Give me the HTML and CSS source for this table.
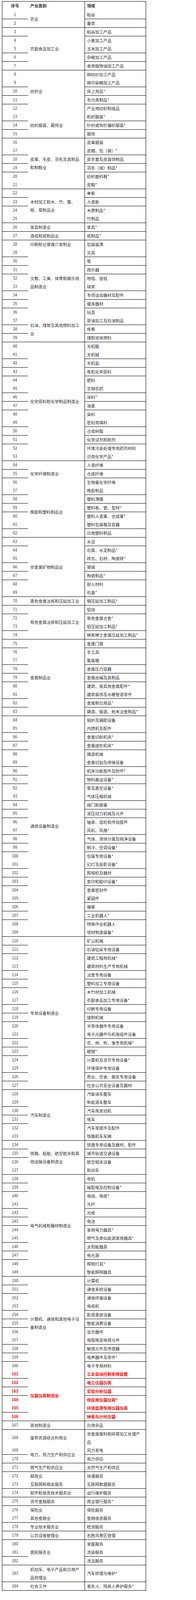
FILE: index.html
```html
<!DOCTYPE html>
<html lang="zh-CN">
<head>
<meta charset="utf-8">
<meta name="viewport" content="width=device-width, initial-scale=1">
<title>产业类别领域表</title>
<link rel="stylesheet" href="styles.css">
</head>
<body>
<div class="tbl" role="table">
<div class="c n h">序号</div><div class="c k h">产业类别</div><div class="c f h">领域</div>
<div class="c n">1</div><div class="c k r2">农业</div><div class="c f">稻谷</div>
<div class="c n">2</div><div class="c f">薯类</div>
<div class="c n">3</div><div class="c k r5">农副食品加工业</div><div class="c f">稻谷加工产品</div>
<div class="c n">4</div><div class="c f">小麦加工产品</div>
<div class="c n">5</div><div class="c f">玉米加工产品</div>
<div class="c n">6</div><div class="c f">杂粮加工产品</div>
<div class="c n">7</div><div class="c f">食用植物油加工产品</div>
<div class="c n">8</div><div class="c k r5">纺织业</div><div class="c f">棉纺纱加工产品</div>
<div class="c n">9</div><div class="c f">棉印染精加工产品</div>
<div class="c n">10</div><div class="c f">床上用品*</div>
<div class="c n">11</div><div class="c f">毛巾类制品*</div>
<div class="c n">12</div><div class="c f">产业用纺织制成品</div>
<div class="c n">13</div><div class="c k r3">纺织服装、服饰业</div><div class="c f">机织服装*</div>
<div class="c n">14</div><div class="c f">针织或钩针编织服装*</div>
<div class="c n">15</div><div class="c f">服饰</div>
<div class="c n">16</div><div class="c k r6">皮革、毛皮、羽毛及其制品和制鞋业</div><div class="c f">皮革服装</div>
<div class="c n">17</div><div class="c f">皮箱、包（袋）*</div>
<div class="c n">18</div><div class="c f">皮手套及皮装饰制品</div>
<div class="c n">19</div><div class="c f">羽毛（绒）制品*</div>
<div class="c n">20</div><div class="c f">纺织面料鞋*</div>
<div class="c n">21</div><div class="c f">皮鞋*</div>
<div class="c n">22</div><div class="c k r4">木材加工和木、竹、藤、棕、草制品业</div><div class="c f">单板</div>
<div class="c n">23</div><div class="c f">人造板</div>
<div class="c n">24</div><div class="c f">木质制品*</div>
<div class="c n">25</div><div class="c f">竹制品</div>
<div class="c n">26</div><div class="c k">家具制造业</div><div class="c f">家具*</div>
<div class="c n">27</div><div class="c k">造纸和纸制品业</div><div class="c f">纸制品*</div>
<div class="c n">28</div><div class="c k">印刷和记录媒介复制业</div><div class="c f">包装装潢</div>
<div class="c n">29</div><div class="c k r8">文教、工美、体育和娱乐用品制造业</div><div class="c f">文具</div>
<div class="c n">30</div><div class="c f">笔</div>
<div class="c n">31</div><div class="c f">西乐器</div>
<div class="c n">32</div><div class="c f">地毯、挂毯</div>
<div class="c n">33</div><div class="c f">球类</div>
<div class="c n">34</div><div class="c f">专项运动器材及配件</div>
<div class="c n">35</div><div class="c f">健身器材</div>
<div class="c n">36</div><div class="c f">玩具</div>
<div class="c n">37</div><div class="c k r3">石油、煤炭及其他燃料加工业</div><div class="c f">原油加工及石油制品</div>
<div class="c n">38</div><div class="c f">炼焦</div>
<div class="c n">39</div><div class="c f">煤制液体燃料</div>
<div class="c n">40</div><div class="c k r14">化学原料和化学制品制造业</div><div class="c f">无机酸</div>
<div class="c n">41</div><div class="c f">无机碱</div>
<div class="c n">42</div><div class="c f">无机盐</div>
<div class="c n">43</div><div class="c f">有机化学原料</div>
<div class="c n">44</div><div class="c f">肥料</div>
<div class="c n">45</div><div class="c f">生物农药</div>
<div class="c n">46</div><div class="c f">涂料*</div>
<div class="c n">47</div><div class="c f">油墨</div>
<div class="c n">48</div><div class="c f">染料</div>
<div class="c n">49</div><div class="c f">密封用填料</div>
<div class="c n">50</div><div class="c f">合成树脂</div>
<div class="c n">51</div><div class="c f">化学试剂和助剂</div>
<div class="c n">52</div><div class="c f">环境污染处理专用药剂材料</div>
<div class="c n">53</div><div class="c f">日用化学产品*</div>
<div class="c n">54</div><div class="c k r3">化学纤维制造业</div><div class="c f">人造纤维</div>
<div class="c n">55</div><div class="c f">合成纤维</div>
<div class="c n">56</div><div class="c f">生物基化学纤维</div>
<div class="c n">57</div><div class="c k r6">橡胶和塑料制品业</div><div class="c f">橡胶制品</div>
<div class="c n">58</div><div class="c f">塑料薄膜</div>
<div class="c n">59</div><div class="c f">塑料板、管、型材*</div>
<div class="c n">60</div><div class="c f">塑料人造革、合成革*</div>
<div class="c n">61</div><div class="c f">塑料包装箱及容器</div>
<div class="c n">62</div><div class="c f">日用塑料制品</div>
<div class="c n">63</div><div class="c k r7">非金属矿物制品业</div><div class="c f">水泥</div>
<div class="c n">64</div><div class="c f">石膏、水泥制品*</div>
<div class="c n">65</div><div class="c f">砖瓦、石材、陶瓷砖*</div>
<div class="c n">66</div><div class="c f">玻璃</div>
<div class="c n">67</div><div class="c f">陶瓷制品*</div>
<div class="c n">68</div><div class="c f">耐火材料</div>
<div class="c n">69</div><div class="c f">石墨*</div>
<div class="c n">70</div><div class="c k">黑色金属冶炼和压延加工业</div><div class="c f">钢压延加工制品*</div>
<div class="c n">71</div><div class="c k r4">有色金属冶炼和压延加工业</div><div class="c f">铅锌</div>
<div class="c n">72</div><div class="c f">有色金属合金*</div>
<div class="c n">73</div><div class="c f">铝压延加工制品*</div>
<div class="c n">74</div><div class="c f">稀有稀土金属压延加工制品*</div>
<div class="c n">75</div><div class="c k r9">金属制品业</div><div class="c f">金属门窗</div>
<div class="c n">76</div><div class="c f">手工具</div>
<div class="c n">77</div><div class="c f">集装箱</div>
<div class="c n">78</div><div class="c f">金属压力容器</div>
<div class="c n">79</div><div class="c f">金属丝绳及其制品</div>
<div class="c n">80</div><div class="c f">建筑、家具用金属配件*</div>
<div class="c n">81</div><div class="c f">建筑装饰及水暖管道零件</div>
<div class="c n">82</div><div class="c f">金属制日用品*</div>
<div class="c n">83</div><div class="c f">铸造、锻造、粉末冶金制品*</div>
<div class="c n">84</div><div class="c k r26">通用设备制造业</div><div class="c f">锅炉及辅助设备</div>
<div class="c n">85</div><div class="c f">内燃机及配件</div>
<div class="c n">86</div><div class="c f">金属切削机床*</div>
<div class="c n">87</div><div class="c f">金属成形机床*</div>
<div class="c n">88</div><div class="c f">铸造机械</div>
<div class="c n">89</div><div class="c f">金属切割及焊接设备</div>
<div class="c n">90</div><div class="c f">机床功能部件及附件*</div>
<div class="c n">91</div><div class="c f">物料搬运设备*</div>
<div class="c n">92</div><div class="c f">泵及真空设备*</div>
<div class="c n">93</div><div class="c f">气体压缩机械</div>
<div class="c n">94</div><div class="c f">阀门和旋塞</div>
<div class="c n">95</div><div class="c f">液压动力机械及元件</div>
<div class="c n">96</div><div class="c f">轴承、齿轮和传动部件</div>
<div class="c n">97</div><div class="c f">风机、风扇*</div>
<div class="c n">98</div><div class="c f">气体、液体分离及纯净设备</div>
<div class="c n">99</div><div class="c f">制冷、空调设备*</div>
<div class="c n">100</div><div class="c f">包装专用设备*</div>
<div class="c n">101</div><div class="c f">幻灯及投影设备*</div>
<div class="c n">102</div><div class="c f">照相机及器材</div>
<div class="c n">103</div><div class="c f">复印和胶印设备*</div>
<div class="c n">104</div><div class="c f">金属密封件</div>
<div class="c n">105</div><div class="c f">紧固件</div>
<div class="c n">106</div><div class="c f">弹簧</div>
<div class="c n">107</div><div class="c f">工业机器人*</div>
<div class="c n">108</div><div class="c f">特殊作业机器人</div>
<div class="c n">109</div><div class="c f">增材制造装备*</div>
<div class="c n">110</div><div class="c k r18">专用设备制造业</div><div class="c f">矿山机械</div>
<div class="c n">111</div><div class="c f">石油钻采专用设备</div>
<div class="c n">112</div><div class="c f">建筑工程用机械*</div>
<div class="c n">113</div><div class="c f">建筑材料生产专用机械</div>
<div class="c n">114</div><div class="c f">冶金专用设备</div>
<div class="c n">115</div><div class="c f">塑料加工专用设备</div>
<div class="c n">116</div><div class="c f">木竹材加工机械</div>
<div class="c n">117</div><div class="c f">农副食品加工专用设备*</div>
<div class="c n">118</div><div class="c f">印刷专用设备</div>
<div class="c n">119</div><div class="c f">缝制机械</div>
<div class="c n">120</div><div class="c f">半导体器件专用设备</div>
<div class="c n">121</div><div class="c f">电子元器件与机电组件设备</div>
<div class="c n">122</div><div class="c f">农、林、牧、渔专用机械*</div>
<div class="c n">123</div><div class="c f">眼镜*</div>
<div class="c n">124</div><div class="c f">计算机及货币专用设备*</div>
<div class="c n">125</div><div class="c f">环境保护专用设备</div>
<div class="c n">126</div><div class="c f">商业、饮食、服务专用设备</div>
<div class="c n">127</div><div class="c f">社会公共安全设备及器材</div>
<div class="c n">128</div><div class="c k r6">汽车制造业</div><div class="c f">汽柴油车整车</div>
<div class="c n">129</div><div class="c f">新能源车整车</div>
<div class="c n">130</div><div class="c f">汽车用发动机</div>
<div class="c n">131</div><div class="c f">电车</div>
<div class="c n">132</div><div class="c f">汽车零部件及配件</div>
<div class="c n">133</div><div class="c f">铁路机车车辆</div>
<div class="c n">134</div><div class="c k r4">铁路、船舶、航空航天和其他运输设备制造业</div><div class="c f">铁路专用设备及器材、配件</div>
<div class="c n">135</div><div class="c f">城市轨道交通设备</div>
<div class="c n">136</div><div class="c f">航空相关设备</div>
<div class="c n">137</div><div class="c f">助动车</div>
<div class="c n">138</div><div class="c k r12">电气机械和器材制造业</div><div class="c f">电机</div>
<div class="c n">139</div><div class="c f">输配电及控制设备*</div>
<div class="c n">140</div><div class="c f">电线、电缆*</div>
<div class="c n">141</div><div class="c f">光纤</div>
<div class="c n">142</div><div class="c f">光缆</div>
<div class="c n">143</div><div class="c f">电池</div>
<div class="c n">144</div><div class="c f">家用电力器具*</div>
<div class="c n">145</div><div class="c f">燃气及类似能源家用器具*</div>
<div class="c n">146</div><div class="c f">太阳能器具</div>
<div class="c n">147</div><div class="c f">电光源</div>
<div class="c n">148</div><div class="c f">照明灯具*</div>
<div class="c n">149</div><div class="c f">智能照明器具</div>
<div class="c n">150</div><div class="c k r11">计算机、通信和其他电子设备制造业</div><div class="c f">计算机</div>
<div class="c n">151</div><div class="c f">通信系统设备</div>
<div class="c n">152</div><div class="c f">通信终端设备</div>
<div class="c n">153</div><div class="c f">电视机</div>
<div class="c n">154</div><div class="c f">影视录放设备</div>
<div class="c n">155</div><div class="c f">智能消费设备</div>
<div class="c n">156</div><div class="c f">显示器件</div>
<div class="c n">157</div><div class="c f">电阻电容电感元件</div>
<div class="c n">158</div><div class="c f">敏感元件及传感器</div>
<div class="c n">159</div><div class="c f">电声器件及零件*</div>
<div class="c n">160</div><div class="c f">电子专用材料</div>
<div class="c n hl">161</div><div class="c k r6 hl">仪器仪表制造业</div><div class="c f hl">工业自动控制系统装置</div>
<div class="c n hl">162</div><div class="c f hl">电工仪器仪表</div>
<div class="c n hl">163</div><div class="c f hl">实验分析仪器</div>
<div class="c n hl">164</div><div class="c f hl">供应用仪器仪表*</div>
<div class="c n hl">165</div><div class="c f hl">环境监测专用仪器仪表</div>
<div class="c n hl">166</div><div class="c f hl">钟表与计时仪器</div>
<div class="c n">167</div><div class="c k">其他制造业</div><div class="c f">日用杂品</div>
<div class="c n">168</div><div class="c k">废弃资源综合利用业</div><div class="c f">非金属废料和碎屑加工处理产品</div>
<div class="c n">169</div><div class="c k r2">电力、热力生产和供应业</div><div class="c f">风力发电</div>
<div class="c n">170</div><div class="c f">电力供应</div>
<div class="c n">171</div><div class="c k">燃气生产和供应业</div><div class="c f">天然气生产和供应</div>
<div class="c n">172</div><div class="c k">邮政业</div><div class="c f">快递服务</div>
<div class="c n">173</div><div class="c k">互联网和相关服务</div><div class="c f">互联网数据服务</div>
<div class="c n">174</div><div class="c k">软件和信息技术服务业</div><div class="c f">运行维护服务</div>
<div class="c n">175</div><div class="c k">货币金融服务</div><div class="c f">商业银行服务*</div>
<div class="c n">176</div><div class="c k">保险业</div><div class="c f">保险服务</div>
<div class="c n">177</div><div class="c k">其他金融业</div><div class="c f">金融信息服务</div>
<div class="c n">178</div><div class="c k">专业技术服务业</div><div class="c f">检测服务</div>
<div class="c n">179</div><div class="c k">公共设施管理业</div><div class="c f">名胜风景区管理</div>
<div class="c n">180</div><div class="c k r3">居民服务业</div><div class="c f">家庭服务</div>
<div class="c n">181</div><div class="c f">洗染服务</div>
<div class="c n">182</div><div class="c f">洗浴服务</div>
<div class="c n">183</div><div class="c k">机动车、电子产品和日用产品修理业</div><div class="c f">汽车修理与维护*</div>
<div class="c n">184</div><div class="c k">社会工作</div><div class="c f">老年人、残疾人养护服务*</div>
</div>
</body>
</html>
```

FILE: styles.css
```css
/* The renderer shows this page at a 4/3 scale, so every length here
   is 3/4 of the target pixel size (1 target px = 0.75px). */
html {
  -webkit-text-size-adjust: 100%;
  text-size-adjust: 100%;
}

html, body {
  margin: 0;
  padding: 0;
  background: #fff;
}

body {
  font-family: "Noto Sans CJK SC", "Noto Sans", sans-serif;
  font-size: 10.5px;
  color: #333;
}

.tbl {
  display: grid;
  grid-template-columns: 66px 144.75px 156px;
  grid-template-rows: 22.5px;
  grid-auto-rows: minmax(21px, auto);
  gap: 0.75px;
  width: 368.25px;
  margin: 3px 0 0 4.5px;
  border: 0.75px solid #000;
  background: #000;
}

.c {
  background: #fff;
  display: flex;
  flex-direction: column;
  justify-content: center;
  padding: 0 5.25px;
  font-size: 10.5px;
  line-height: 21px;
  min-width: 0;
}

.n {
  grid-column: 1;
  padding: 0 1.5px;
  align-items: center;
  font-size: 9.75px;
}

.k { grid-column: 2; }
.f { grid-column: 3; }

.h {
  font-weight: bold;
  font-size: 10.5px;
  line-height: 22.5px;
}

.hl {
  color: #f00;
  font-weight: bold;
}

.r2 { grid-row: span 2; }
.r3 { grid-row: span 3; }
.r4 { grid-row: span 4; }
.r5 { grid-row: span 5; }
.r6 { grid-row: span 6; }
.r7 { grid-row: span 7; }
.r8 { grid-row: span 8; }
.r9 { grid-row: span 9; }
.r11 { grid-row: span 11; }
.r12 { grid-row: span 12; }
.r14 { grid-row: span 14; }
.r18 { grid-row: span 18; }
.r26 { grid-row: span 26; }
```
